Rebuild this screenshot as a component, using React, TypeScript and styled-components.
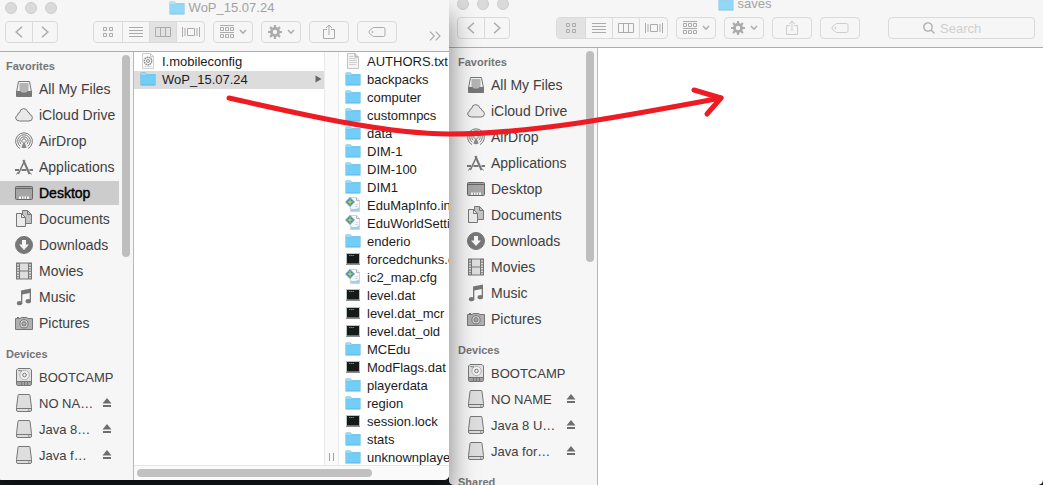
import React from "react";
import styled, { createGlobalStyle, css } from "styled-components";

const GlobalStyle = createGlobalStyle`
  *, *::before, *::after { box-sizing: border-box; }
  body {
    margin: 0;
    font-family: "Liberation Sans", Arial, sans-serif;
    font-size: 13px;
    color: #1c1c1c;
    background: #171c20;
  }
  button, input { font: inherit; color: inherit; }
  svg { display: block; flex: none; }
  ul { list-style: none; margin: 0; padding: 0; }
`;

const Desktop = styled.div`
  position: relative;
  display: grid;
  grid-template-columns: 449fr 594fr;
  height: 100vh;
  overflow: hidden;
`;

const Window = styled.section<{ $front?: boolean }>`
  display: flex;
  flex-direction: column;
  min-width: 0;
  min-height: 0;
  overflow: hidden;
  background: #fff;
  border-radius: 0 0 5px 5px;
  ${(p) =>
    p.$front
      ? css`
          z-index: 1;
          margin: 0 0 5px -3px;
          box-shadow: 0 16px 28px rgba(0, 0, 0, 0.5);
        `
      : css`
          margin-top: -4px;
        `}
`;

const TitleBar = styled.header`
  flex: none;
  padding: 0 8px 8px;
  background: #f6f6f6;
  border-bottom: 1px solid #acacac;
`;

const TitleRow = styled.div`
  display: grid;
  grid-template-columns: 1fr auto 1fr;
  align-items: center;
  height: 16px;
  margin-bottom: 5px;
  padding-right: 3px;
`;

const Lights = styled.div`
  display: flex;
  gap: 8px;
`;

const Light = styled.button`
  width: 12px;
  height: 12px;
  padding: 0;
  border: 1px solid #cdcdcd;
  border-radius: 50%;
  background: #dadada;
`;

const Title = styled.h1`
  display: flex;
  align-items: center;
  gap: 4px;
  margin: 0;
  font-size: 13px;
  line-height: 16px;
  font-weight: 400;
  color: #a2a2a2;
  white-space: nowrap;
  svg { opacity: 0.75; }
`;

const Toolbar = styled.div`
  display: flex;
  gap: 8px;
  height: 22px;
  color: #ababab;
`;

const Group = styled.div<{ $gap?: number }>`
  display: flex;
  flex: none;
  margin-right: ${(p) => p.$gap ?? 0}px;
  border: 1px solid #dadada;
  border-radius: 4px;
  overflow: hidden;
`;

const Segment = styled.button<{ $active?: boolean }>`
  display: grid;
  place-items: center;
  width: 27px;
  padding: 0;
  border: 0;
  background: ${(p) => (p.$active ? "#e2e2e2" : "transparent")};
  &:first-child { width: 28px; }
  & + & { border-left: 1px solid #dadada; }
  &:last-child { width: 28px; }
`;

const NavSegment = styled(Segment)`
  &:first-child { width: 26px; }
  &:last-child { width: 25px; }
`;

const ToolButton = styled.button<{ $faded?: boolean }>`
  display: flex;
  flex: none;
  align-items: center;
  justify-content: center;
  gap: 5px;
  width: 40px;
  padding: 0;
  border: 1px solid #dadada;
  border-radius: 4px;
  background: transparent;
  color: ${(p) => (p.$faded ? "#cdcdcd" : "inherit")};
`;

const Overflow = styled.button`
  align-self: end;
  margin-left: auto;
  padding: 0;
  border: 0;
  background: transparent;
`;

const SearchBox = styled.label`
  display: flex;
  flex: 1;
  align-items: center;
  gap: 5px;
  min-width: 0;
  margin-left: 20px;
  padding-left: 34px;
  border: 1px solid #dadada;
  border-radius: 4px;
`;

const SearchInput = styled.input.attrs({ type: "search" })`
  flex: 1;
  min-width: 0;
  padding: 0;
  border: 0;
  outline: 0;
  background: transparent;
  &::placeholder { color: #cfcfcf; opacity: 1; }
`;

const Body = styled.div`
  display: flex;
  flex: 1;
  min-height: 0;
`;

const SidebarPane = styled.nav<{ $width: number }>`
  display: flex;
  flex: none;
  width: ${(p) => p.$width}px;
  background: #f6f6f6;
  border-right: 1px solid #b9b9b9;
  overflow: hidden;
`;

const Sections = styled.div`
  display: flex;
  flex: 1;
  flex-direction: column;
  gap: 4px;
  min-width: 0;
`;

const Heading = styled.h2`
  height: 24px;
  margin: 0;
  padding: 4px 0 0 9px;
  font-size: 11px;
  line-height: 20px;
  font-weight: 700;
  color: #757575;
`;

const PlaceList = styled.ul`
  display: flex;
  flex-direction: column;
  gap: 2px;
  padding: 1px 0;
`;

const Place = styled.a<{ $selected?: boolean; $small?: boolean }>`
  display: flex;
  align-items: center;
  gap: 6px;
  height: 24px;
  padding: 0 6px 0 18px;
  font-size: ${(p) => (p.$small ? 13 : 14)}px;
  color: ${(p) => (p.$selected ? "#000" : "#404040")};
  background: ${(p) => (p.$selected ? "#cccccc" : "transparent")};
  -webkit-text-stroke: ${(p) => (p.$selected ? "0.4px #000" : "0")};
  text-decoration: none;
  white-space: nowrap;
`;

const PlaceName = styled.span`
  flex: 1;
  min-width: 0;
`;

const ScrollTrack = styled.div`
  flex: none;
  width: 14px;
  padding: 3px 3px 0;
`;

const ScrollThumb = styled.div<{ $length: number }>`
  width: 8px;
  height: ${(p) => p.$length}px;
  border-radius: 4px;
  background: #bebebe;
`;

const Browser = styled.div`
  display: flex;
  flex: 1;
  flex-direction: column;
  min-width: 0;
`;

const Columns = styled.div`
  display: flex;
  flex: 1;
  min-height: 0;
  overflow: hidden;
`;

const FileList = styled.ul<{ $fixed?: boolean }>`
  flex: ${(p) => (p.$fixed ? "0 0 190px" : "1")};
  min-width: 0;
  padding-top: 1px;
  overflow: hidden;
`;

const FileRow = styled.li<{ $selected?: boolean }>`
  display: flex;
  align-items: center;
  gap: 6px;
  height: 18px;
  padding: 0 2px 2px 6px;
  white-space: nowrap;
  background: ${(p) => (p.$selected ? "#dcdcdc" : "transparent")};
`;

const Disclosure = styled.span`
  margin-left: auto;
`;

const Gutter = styled.div`
  display: flex;
  flex: none;
  align-items: flex-end;
  justify-content: center;
  gap: 3px;
  width: 15px;
  padding-bottom: 4px;
  background: #fafafa;
  border: solid #ebebeb;
  border-width: 0 1px;
`;

const GripLine = styled.span`
  width: 1px;
  height: 8px;
  background: #a0a0a0;
`;

const HorizontalTrack = styled.div`
  flex: none;
  height: 15px;
  padding: 3px;
  background: #fafafa;
  border-top: 1px solid #e6e6e6;
`;

const HorizontalThumb = styled.div`
  width: 76%;
  height: 8px;
  border-radius: 4px;
  background: #c1c1c1;
`;

const Annotation = styled.svg`
  position: absolute;
  top: 0;
  left: 0;
  z-index: 2;
  pointer-events: none;
`;

/* ---- icons ---- */

const FolderIcon = () => (
  <svg width="16" height="16" viewBox="0 0 16 16">
    <path d="M0.5 2.5Q.5 1.5 1.5 1.5H5.5L6.8 3H15.5V14.5H.5Z" fill="#55b2dd" />
    <path d="M1 3.2V2h4.3l1.3 1.4H15v1H1Z" fill="#9adcf8" />
    <path d="M1 4.8H15V13.6H1Z" fill="#72cdf7" />
  </svg>
);

const TextIcon = () => (
  <svg width="16" height="16" viewBox="0 0 16 16" fill="none">
    <path d="M2.5.5H10L13.5 4V15.5H2.5Z" fill="#f4f4f4" stroke="#c4c4c4" />
    <path d="M10 .5V4H13.5" fill="#ddd" stroke="#a5a5a5" />
    <path d="M4 3.500H8.500M4 5.500H11M4 7.500H12M4 9.500H12M4 11.500H11" stroke="#cfcfcf" />
  </svg>
);

const ConfigIcon = () => (
  <svg width="16" height="16" viewBox="0 0 16 16" fill="none">
    <path d="M2.500.500H10.500L13.500 3.500V15.500H2.500Z" fill="#fafafa" stroke="#cfcfcf" />
    <path d="M10.500.500V3.500H13.500" stroke="#c4c4c4" />
    <circle cx="8" cy="8" r="3.700" stroke="#8e8e8e" strokeWidth="1.400" strokeDasharray="1.700 .500" />
    <circle cx="8" cy="8" r="1.500" stroke="#8e8e8e" />
    <path d="M4.500 13.500H11.500" stroke="#d5d5d5" />
  </svg>
);

const TerminalIcon = () => (
  <svg width="16" height="16" viewBox="0 0 16 16">
    <path d="M1 2H15V14H1Z" fill="#b9c4c4" />
    <path d="M2 3H14V12.500H2Z" fill="#161a19" />
    <path d="M4 4.500H9" stroke="#3fae59" strokeDasharray="1.500 .500" />
    <path d="M1 13.500H15" stroke="#8c8c8c" />
  </svg>
);

const EditorIcon = () => (
  <svg width="16" height="16" viewBox="0 0 16 16">
    <path d="M4.500.500H11.500L14.500 3.500V14.500H5.500Z" fill="#f5f8fa" stroke="#cdd3d7" />
    <path d="M11.500 .500V3.500H14.500" fill="none" stroke="#b4bcc1" />
    <path d="M5 .500L9.500 5 5 9.500.500 5Z" fill="#3f83ab" />
    <path d="M5 2.200V7.800M2.500 5H7.500" stroke="#b5d06a" strokeWidth="1.300" />
    <path d="M5 .500L9.500 5 5 9.500.500 5Z" fill="none" stroke="#78a8bd" strokeWidth=".8" />
    <path d="M6 11.500Q10 13 14 10.500V14H6Z" fill="#9fd0ea" />
    <path d="M11 7.500H13M10 9.500H13" stroke="#d2d8dc" />
  </svg>
);

type PlaceIconName =
  | "files" | "cloud" | "airdrop" | "apps" | "desktop" | "documents"
  | "downloads" | "movies" | "music" | "pictures" | "disk" | "drive";

const placeShapes: Record<PlaceIconName, React.ReactNode> = {
  files: (
    <>
      <path d="M3.500 1.500H14.500L16.500 12H1.500Z" fill="#f2f2f2" />
      <path d="M1.500 11.500H5.500L6.500 13H11.500L12.500 11.500H16.500V16.500H1.500Z" fill="#777" />
      <path d="M4.500 4H13.500M4.500 6H13.500M4.500 8H13.500M4.500 10H13.500" />
    </>
  ),
  cloud: <path d="M4.500 15H14Q17.400 15 17.400 11.700 17.200 8.700 14.800 8.500 15 6.500 13 6.200 12 2.600 8.600 2.600 5 2.800 4.600 6.600 2.500 6.700 2.700 9.200.600 9.800.600 12 1 14.800 4.500 15Z" fill="#e9e9e9" />,
  airdrop: (
    <>
      <path d="M5 16.600A8.400 8.400 0 1 1 13 16.600" />
      <path d="M5.300 14.200A6.300 6.300 0 1 1 12.700 14.200" />
      <path d="M6.200 12.200A4.200 4.200 0 1 1 11.800 12.200" />
      <path d="M7.500 10.600A2.200 2.200 0 1 1 10.500 10.600" />
      <path d="M9 9L11.700 15.500Q9 17 6.300 15.500Z" fill="#8a8a8a" stroke="none" />
    </>
  ),
  apps: (
    <>
      <path d="M8.300 2L14.500 16" strokeWidth="2" />
      <path d="M9.700 2.500L3.300 16" strokeWidth="1.600" />
      <path d="M0 12H4M6.500 12H11.500M14.500 12H18" strokeWidth="2" />
      <path d="M1.500 16.500L3 14M15 14.500L16.500 16.500" />
    </>
  ),
  desktop: (
    <>
      <rect x=".500" y="2.500" width="17" height="13" rx="1" fill="#a6a6a6" stroke="#666" />
      <path d="M1 4.500H17" stroke="#666" />
      <path d="M4 15V12.500H14V15" fill="#f2f2f2" stroke="none" />
      <path d="M6.500 12.500V15M9 12.500V15M11.500 12.500V15" stroke="#999" />
    </>
  ),
  documents: (
    <>
      <path d="M7.500.500H12.500L16.500 4.500V13.500H7.500Z" fill="#c4c4c4" />
      <path d="M12.500.500V4.500H16.500" />
      <path d="M1.500 3.500H6.500L10.500 7.500V16.500H1.500Z" fill="#ececec" />
      <path d="M6.500 3.500V7.500H10.500" />
    </>
  ),
  downloads: (
    <>
      <circle cx="9" cy="9" r="8.500" fill="#777" />
      <path d="M7 4H11V8.500H14L9 14 4 8.500H7Z" fill="#f6f6f6" stroke="none" />
    </>
  ),
  movies: (
    <>
      <rect x="1.500" y="1" width="15" height="16" fill="#dedede" />
      <path d="M4.500 1V17M13.500 1V17M4.500 9H13.500" />
      <path d="M3 1V17M15 1V17" strokeWidth="1.600" strokeDasharray="1.300 1.300" />
    </>
  ),
  music: (
    <g fill="#777" stroke="none">
      <path d="M6 2.500L16 .500V13H14.700V5L7.300 6.500V15H6Z" />
      <ellipse cx="4.600" cy="15.200" rx="2.700" ry="2.100" />
      <ellipse cx="13.300" cy="13.200" rx="2.700" ry="2.100" />
    </g>
  ),
  pictures: (
    <>
      <path d="M.500 4.500H5L6.300 3.500H11.700L13 4.500H17.500V15.500H.500Z" fill="#b0b0b0" />
      <path d="M2 3.500H4" />
      <circle cx="9" cy="9.800" r="4.100" fill="#d8d8d8" />
      <circle cx="9" cy="9.800" r="2.100" fill="#aaa" />
    </>
  ),
  disk: (
    <>
      <path d="M3 .500H15L16.500 2V16Q16.500 17.500 15 17.500H3Q1.500 17.500 1.500 16V2Z" fill="#e2e2e2" />
      <path d="M2 14H16V17H2Z" fill="#a2a2a2" stroke="none" />
      <circle cx="9.500" cy="7" r="4.700" stroke="#b4b4b4" fill="#f2f2f2" />
      <circle cx="9.500" cy="7" r="1.800" />
      <path d="M3.500 2.500L7 3M1.500 13.500H16.500M6.500 14V17M9.500 14V17M12.500 14V17" />
    </>
  ),
  drive: (
    <>
      <path d="M4 .500H14Q14.900.500 15 1.500L16.500 13.500V16Q16.500 17.500 15 17.500H3Q1.500 17.500 1.500 16V13.500L3 1.500Q3.100.500 4 .500Z" fill="#dedede" />
      <path d="M2 14.500H16" />
      <path d="M13 16H14.500" />
    </>
  ),
};

const PlaceIcon = ({ name }: { name: PlaceIconName }) => (
  <svg width="18" height="18" viewBox="0 0 18 18" fill="none" stroke="#777">
    {placeShapes[name]}
  </svg>
);

const EjectIcon = () => (
  <svg width="12" height="10" viewBox="0 0 12 10" fill="#6e6e6e">
    <path d="M6 0L10.500 5.500H1.500ZM2 7H10V9H2Z" />
  </svg>
);

const stroke = { fill: "none", stroke: "currentColor" };

const Chevron = ({ back }: { back?: boolean }) => (
  <svg width="8" height="12" viewBox="0 0 8 12" {...stroke} strokeWidth="1.500">
    <path d={back ? "M7 .700L1.200 6 7 11.300" : "M1 .700L6.800 6 1 11.300"} />
  </svg>
);

const DownChevron = () => (
  <svg width="8" height="6" viewBox="0 0 8 6" {...stroke} strokeWidth="1.500">
    <path d="M1 1L4 4.200 7 1" />
  </svg>
);

const GridIcon = () => (
  <svg width="12" height="12" viewBox="0 0 12 12" {...stroke}>
    <path d="M1.500 1.500H4.500V4.500H1.500ZM7.500 1.500H10.500V4.500H7.500ZM1.500 7.500H4.500V10.500H1.500ZM7.500 7.500H10.500V10.500H7.500Z" />
  </svg>
);

const ListIcon = () => (
  <svg width="14" height="12" viewBox="0 0 14 12" {...stroke}>
    <path d="M0 1.500H14M0 4.500H14M0 7.500H14M0 10.500H14" />
  </svg>
);

const ColumnsIcon = () => (
  <svg width="16" height="10" viewBox="0 0 16 10" {...stroke}>
    <path d="M.500.500H15.500V9.500H.500ZM5.500.500V9.500M10.500.500V9.500" />
  </svg>
);

const FlowIcon = () => (
  <svg width="18" height="12" viewBox="0 0 18 12" {...stroke}>
    <path d="M5.500 2.500H12.500V9.500H5.500ZM.500 1V11M3 2V10M15 2V10M17.500 1V11" />
  </svg>
);

const ArrangeIcon = () => (
  <svg width="14" height="14" viewBox="0 0 14 14" {...stroke}>
    <path d="M0 .500H14M0 7.500H14M.500 2.500H3.500V5.500H.500ZM5.500 2.500H8.500V5.500H5.500ZM10.500 2.500H13.500V5.500H10.500ZM.500 9.500H3.500V12.500H.500ZM5.500 9.500H8.500V12.500H5.500ZM10.500 9.500H13.500V12.500H10.500Z" />
  </svg>
);

const GearIcon = () => (
  <svg width="14" height="14" viewBox="0 0 14 14" {...stroke}>
    <circle cx="7" cy="7" r="3.600" strokeWidth="2.800" />
    <path d="M7 0V3M7 11V14M0 7H3M11 7H14M2.050 2.050L4 4M10 10L11.950 11.950M2.050 11.950L4 10M10 4L11.950 2.050" strokeWidth="2.200" />
  </svg>
);

const ShareIcon = () => (
  <svg width="12" height="16" viewBox="0 0 12 16" {...stroke}>
    <path d="M4 5.500H.500V14.500H11.500V5.500H8M6 11V1.500M3 4L6 1 9 4" />
  </svg>
);

const TagIcon = () => (
  <svg width="18" height="12" viewBox="0 0 18 12" {...stroke}>
    <path d="M5.500 1.500H15.500Q17 1.500 17 3V9Q17 10.500 15.500 10.500H5.500L1.500 7.500Q.500 6 1.500 4.500Z" />
    <circle cx="4.500" cy="6" r=".6" />
  </svg>
);

const DoubleChevron = () => (
  <svg width="12" height="12" viewBox="0 0 12 12" {...stroke} strokeWidth="1.200">
    <path d="M1 .700L5.300 5 1 9.300M6.700.700L11 5 6.700 9.300" />
  </svg>
);

const SearchIcon = () => (
  <svg width="12" height="12" viewBox="0 0 12 12" {...stroke} strokeWidth="1.300">
    <circle cx="5" cy="5" r="4.200" />
    <path d="M8 8L11.500 11.500" />
  </svg>
);

/* ---- data ---- */

interface PlaceData {
  icon: PlaceIconName;
  name: string;
  eject?: boolean;
}

const favorites: PlaceData[] = [
  { icon: "files", name: "All My Files" },
  { icon: "cloud", name: "iCloud Drive" },
  { icon: "airdrop", name: "AirDrop" },
  { icon: "apps", name: "Applications" },
  { icon: "desktop", name: "Desktop" },
  { icon: "documents", name: "Documents" },
  { icon: "downloads", name: "Downloads" },
  { icon: "movies", name: "Movies" },
  { icon: "music", name: "Music" },
  { icon: "pictures", name: "Pictures" },
];

const devices = (...drives: string[]): PlaceData[] => [
  { icon: "disk", name: "BOOTCAMP" },
  ...drives.map((name) => ({ icon: "drive" as const, name, eject: true })),
];

type FileKind = "folder" | "text" | "config" | "terminal" | "editor";

const fileIcons: Record<FileKind, () => React.ReactElement> = {
  folder: FolderIcon,
  text: TextIcon,
  config: ConfigIcon,
  terminal: TerminalIcon,
  editor: EditorIcon,
};

const worldFiles: [FileKind, string][] = [
  ["text", "AUTHORS.txt"],
  ["folder", "backpacks"],
  ["folder", "computer"],
  ["folder", "customnpcs"],
  ["folder", "data"],
  ["folder", "DIM-1"],
  ["folder", "DIM-100"],
  ["folder", "DIM1"],
  ["editor", "EduMapInfo.ini"],
  ["editor", "EduWorldSettings"],
  ["folder", "enderio"],
  ["terminal", "forcedchunks.dat"],
  ["editor", "ic2_map.cfg"],
  ["terminal", "level.dat"],
  ["terminal", "level.dat_mcr"],
  ["terminal", "level.dat_old"],
  ["folder", "MCEdu"],
  ["terminal", "ModFlags.dat"],
  ["folder", "playerdata"],
  ["folder", "region"],
  ["terminal", "session.lock"],
  ["folder", "stats"],
  ["folder", "unknownplayers"],
];

/* ---- parts ---- */

const views = [
  { id: "icons", Icon: GridIcon },
  { id: "list", Icon: ListIcon },
  { id: "columns", Icon: ColumnsIcon },
  { id: "flow", Icon: FlowIcon },
];

interface HeaderProps {
  title: string;
  view: string;
  navGap: number;
  faded?: boolean;
  children: React.ReactNode;
}

const Header = ({ title, view, navGap, faded, children }: HeaderProps) => (
  <TitleBar>
    <TitleRow>
      <Lights>
        <Light aria-label="Close" />
        <Light aria-label="Minimize" />
        <Light aria-label="Zoom" />
      </Lights>
      <Title>
        <FolderIcon />
        {title}
      </Title>
    </TitleRow>
    <Toolbar>
      <Group $gap={navGap}>
        <NavSegment aria-label="Back"><Chevron back /></NavSegment>
        <NavSegment aria-label="Forward"><Chevron /></NavSegment>
      </Group>
      <Group>
        {views.map(({ id, Icon }) => (
          <Segment key={id} $active={id === view} aria-label={`View as ${id}`}>
            <Icon />
          </Segment>
        ))}
      </Group>
      <ToolButton aria-label="Arrange"><ArrangeIcon /><DownChevron /></ToolButton>
      <ToolButton aria-label="Actions"><GearIcon /><DownChevron /></ToolButton>
      <ToolButton aria-label="Share" $faded={faded}><ShareIcon /></ToolButton>
      <ToolButton aria-label="Tags" $faded={faded}><TagIcon /></ToolButton>
      {children}
    </Toolbar>
  </TitleBar>
);

interface PlaceSectionProps {
  title: string;
  places?: PlaceData[];
  selected?: string;
  small?: boolean;
}

const PlaceSection = ({ title, places = [], selected, small }: PlaceSectionProps) => (
  <div>
    <Heading>{title}</Heading>
    <PlaceList>
      {places.map((place) => (
        <li key={place.name}>
          <Place href="#" $selected={place.name === selected} $small={small}>
            <PlaceIcon name={place.icon} />
            <PlaceName>{place.name}</PlaceName>
            {place.eject && <EjectIcon />}
          </Place>
        </li>
      ))}
    </PlaceList>
  </div>
);

interface SidebarProps {
  width: number;
  thumb: number;
  children: React.ReactNode;
}

const Sidebar = ({ width, thumb, children }: SidebarProps) => (
  <SidebarPane $width={width}>
    <Sections>{children}</Sections>
    <ScrollTrack>
      <ScrollThumb $length={thumb} />
    </ScrollTrack>
  </SidebarPane>
);

const FileItem = ({ kind, name, selected }: { kind: FileKind; name: string; selected?: boolean }) => {
  const Icon = fileIcons[kind];
  return (
    <FileRow $selected={selected}>
      <Icon />
      {name}
      {selected && (
        <Disclosure>
          <svg width="7" height="8" viewBox="0 0 7 8" fill="#666">
            <path d="M.500.500L6.500 4 .500 7.500Z" />
          </svg>
        </Disclosure>
      )}
    </FileRow>
  );
};

export default function App() {
  return (
    <>
      <GlobalStyle />
      <Desktop>
        <Window $front>
          <Header title="WoP_15.07.24" view="columns" navGap={27}>
            <Overflow aria-label="More tools"><DoubleChevron /></Overflow>
          </Header>
          <Body>
            <Sidebar width={137} thumb={202}>
              <PlaceSection title="Favorites" places={favorites} selected="Desktop" />
              <PlaceSection title="Devices" places={devices("NO NA…", "Java 8…", "Java f…")} small />
            </Sidebar>
            <Browser>
              <Columns>
                <FileList $fixed>
                  <FileItem kind="config" name="I.mobileconfig" />
                  <FileItem kind="folder" name="WoP_15.07.24" selected />
                </FileList>
                <Gutter>
                  <GripLine />
                  <GripLine />
                </Gutter>
                <FileList>
                  {worldFiles.map(([kind, name]) => (
                    <FileItem key={name} kind={kind} name={name} />
                  ))}
                </FileList>
              </Columns>
              <HorizontalTrack>
                <HorizontalThumb />
              </HorizontalTrack>
            </Browser>
          </Body>
        </Window>

        <Window>
          <Header title="saves" view="icons" navGap={38} faded>
            <SearchBox>
              <SearchIcon />
              <SearchInput placeholder="Search" aria-label="Search" />
            </SearchBox>
          </Header>
          <Body>
            <Sidebar width={149} thumb={211}>
              <PlaceSection title="Favorites" places={favorites} />
              <PlaceSection title="Devices" places={devices("NO NAME", "Java 8 U…", "Java for…")} small />
              <PlaceSection title="Shared" />
            </Sidebar>
          </Body>
        </Window>

        <Annotation width="1043" height="485" viewBox="0 0 1043 485" fill="none" stroke="#ed1c24" strokeWidth="5" strokeLinecap="round" strokeLinejoin="round">
          <path d="M229 98C300 114 385 134 449 134C530 134 620 117 721 98" />
          <path d="M694 90L721 98L707 114" />
        </Annotation>
      </Desktop>
    </>
  );
}
